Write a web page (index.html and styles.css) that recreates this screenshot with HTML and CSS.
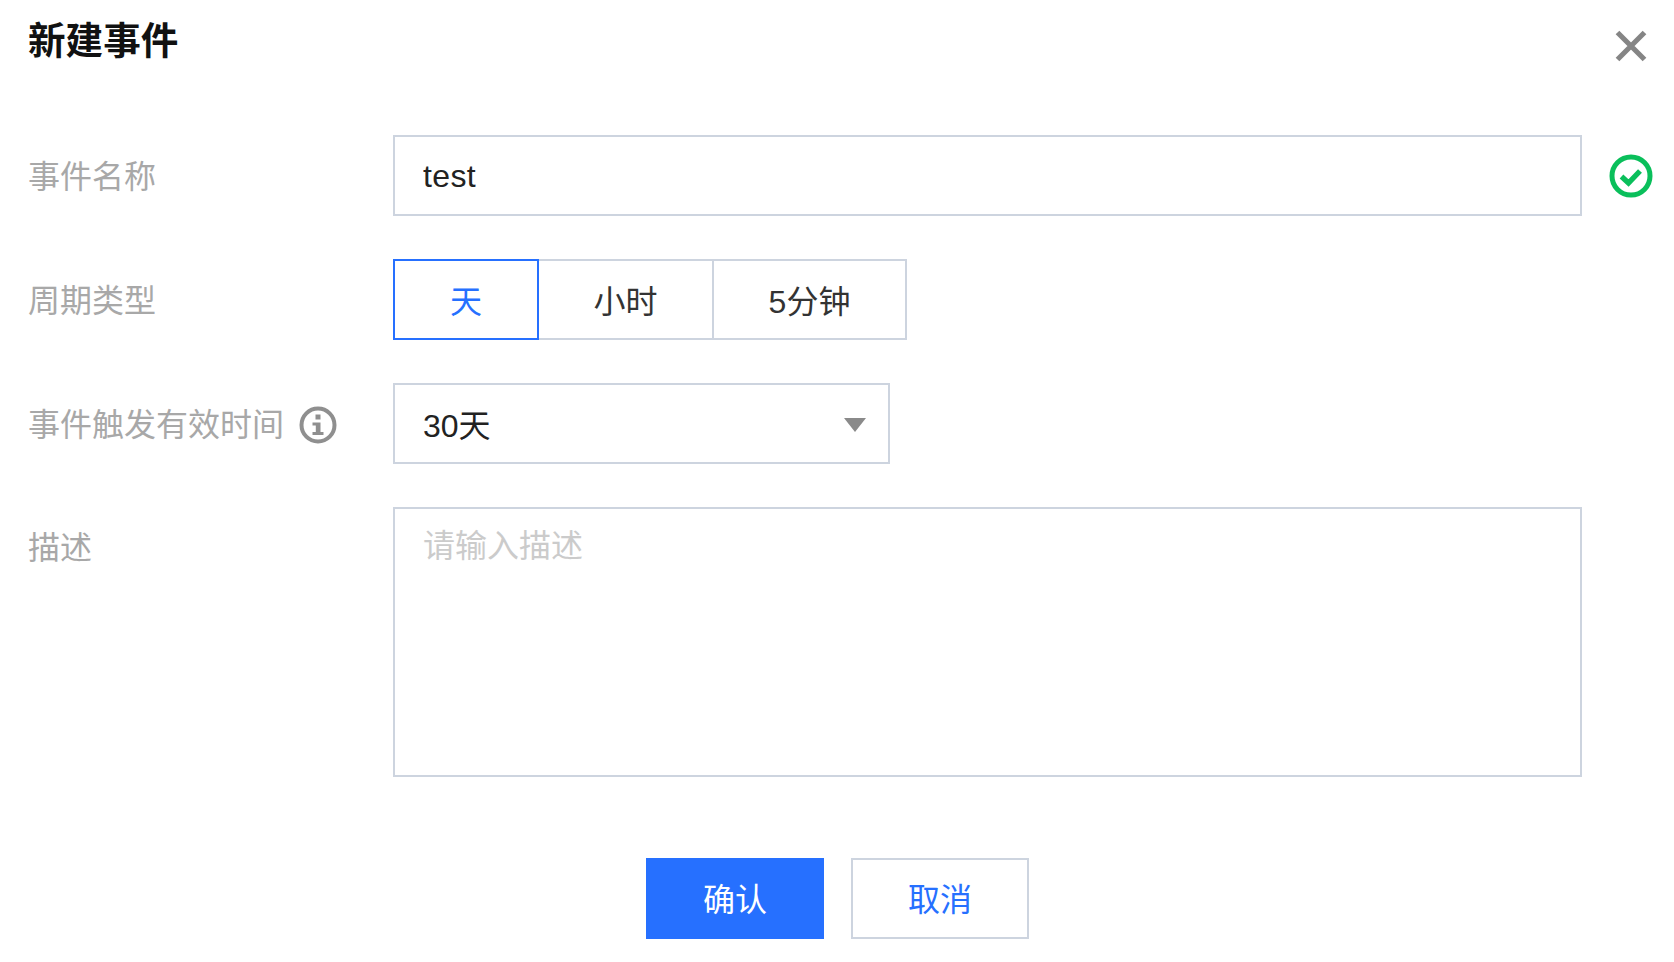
FILE: index.html
```html
<!DOCTYPE html>
<html lang="zh-CN">
<head>
<meta charset="utf-8">
<title>新建事件</title>
<link rel="stylesheet" href="styles.css">
</head>
<body>
<div class="dialog">
  <header class="head">
    <h1 class="title">新建事件</h1>
    <button class="close" aria-label="关闭">
      <svg viewBox="0 0 32 32" width="32" height="32"><path d="M2.5 2.5L29.5 29.5M29.5 2.5L2.5 29.5" stroke="#858585" stroke-width="5.2" fill="none"/></svg>
    </button>
  </header>
  <form class="form">
    <div class="row r-name">
      <label class="label">事件名称</label>
      <input class="field field-full" value="test">
      <svg class="ok" viewBox="0 0 44 44" width="44" height="44"><circle cx="22" cy="22" r="19" fill="none" stroke="#0abf5b" stroke-width="5"/><path d="M12.5 22.5L19.5 29L31 17" fill="none" stroke="#0abf5b" stroke-width="5.4"/></svg>
    </div>
    <div class="row r-cycle">
      <label class="label">周期类型</label>
      <div class="seg">
        <span class="seg-item seg-a is-on">天</span>
        <span class="seg-item seg-b">小时</span>
        <span class="seg-item seg-c">5分钟</span>
      </div>
    </div>
    <div class="row r-valid">
      <label class="label">事件触发有效时间
        <svg class="info" viewBox="0 0 38 38" width="38" height="38"><circle cx="19" cy="19" r="16.5" fill="none" stroke="#8f8f8f" stroke-width="4"/><rect x="16.5" y="8.5" width="5" height="5" fill="#8f8f8f"/><path d="M13.5 16.5H21.5V26H24.5V29H13.5V26H16.8V19.5H13.5Z" fill="#8f8f8f"/></svg>
      </label>
      <div class="select">
        <span class="select-value">30天</span>
        <span class="caret"></span>
      </div>
    </div>
    <div class="row r-desc">
      <label class="label label-top">描述</label>
      <textarea class="area" placeholder="请输入描述"></textarea>
    </div>
    <div class="actions">
      <button type="button" class="btn btn-primary">确认</button>
      <button type="button" class="btn btn-plain">取消</button>
    </div>
  </form>
</div>
</body>
</html>
```

FILE: styles.css
```css
* { box-sizing: border-box; }
html, body { margin: 0; height: 100%; background: #fff; }
body {
  font-family: "Liberation Sans", "Noto Sans CJK SC", sans-serif;
  font-size: 32px;
  color: #222;
}
.dialog { padding: 16px 0 0 28px; width: 1674px; height: 962px; }
.head { display: flex; justify-content: space-between; align-items: flex-start; height: 119px; padding-right: 27px; }
.title { margin: 0; font-size: 37.6px; line-height: 50px; font-weight: 700; color: #111; }
.close { padding: 0; margin-top: 14px; border: 0; background: none; width: 32px; height: 32px; display: block; }
.close svg { display: block; }
.row { display: flex; align-items: center; height: 81px; margin-bottom: 43px; }
.label { width: 365px; flex: none; color: #a8a8a8; display: flex; align-items: center; line-height: 44px; padding-top: 2px; }
.label-top { align-self: flex-start; margin-top: 17px; }
.info { margin-left: 15px; }
.field, .select, .area {
  border: 2px solid #cdd4df;
  background: #fff;
  font: inherit;
  color: #222;
  outline: none;
  border-radius: 0;
}
.field { height: 81px; padding: 2px 27px 0 28px; letter-spacing: 0.35px; }
.field-full { width: 1189px; }
.ok { margin-left: 27px; }
.seg { display: flex; height: 81px; }
.seg-item {
  display: flex; align-items: center; justify-content: center;
  border: 2px solid #cdd4df;
  margin-left: -2px;
  padding-bottom: 2px;
  color: #333;
}
.seg-a { width: 146px; margin-left: 0; position: relative; }
.seg-b { width: 177px; }
.seg-c { width: 195px; }
.is-on { border-color: #2670ff; color: #2670ff; z-index: 1; }
.select { width: 497px; height: 81px; padding: 0 22px 0 28px; display: flex; justify-content: space-between; align-items: center; }
.select-value { margin-top: -2px; }
.caret { width: 0; height: 0; margin-top: 3px; border-left: 11px solid transparent; border-right: 11px solid transparent; border-top: 14px solid #8a8a8a; }
.r-desc { height: 270px; align-items: flex-start; margin-bottom: 81px; }
.area { width: 1189px; height: 270px; padding: 17px 27px 16px 28px; resize: none; line-height: 40px; display: block; }
.area::placeholder { color: #cbcbcb; opacity: 1; }
.actions { display: flex; gap: 27px; margin-left: 618px; }
.btn { width: 178px; height: 81px; font: inherit; border-radius: 0; padding: 0 0 4px; }
.btn-primary { background: #2670ff; border: 0; color: #fff; }
.btn-plain { background: #fff; border: 2px solid #cdd4df; color: #2670ff; }
```
